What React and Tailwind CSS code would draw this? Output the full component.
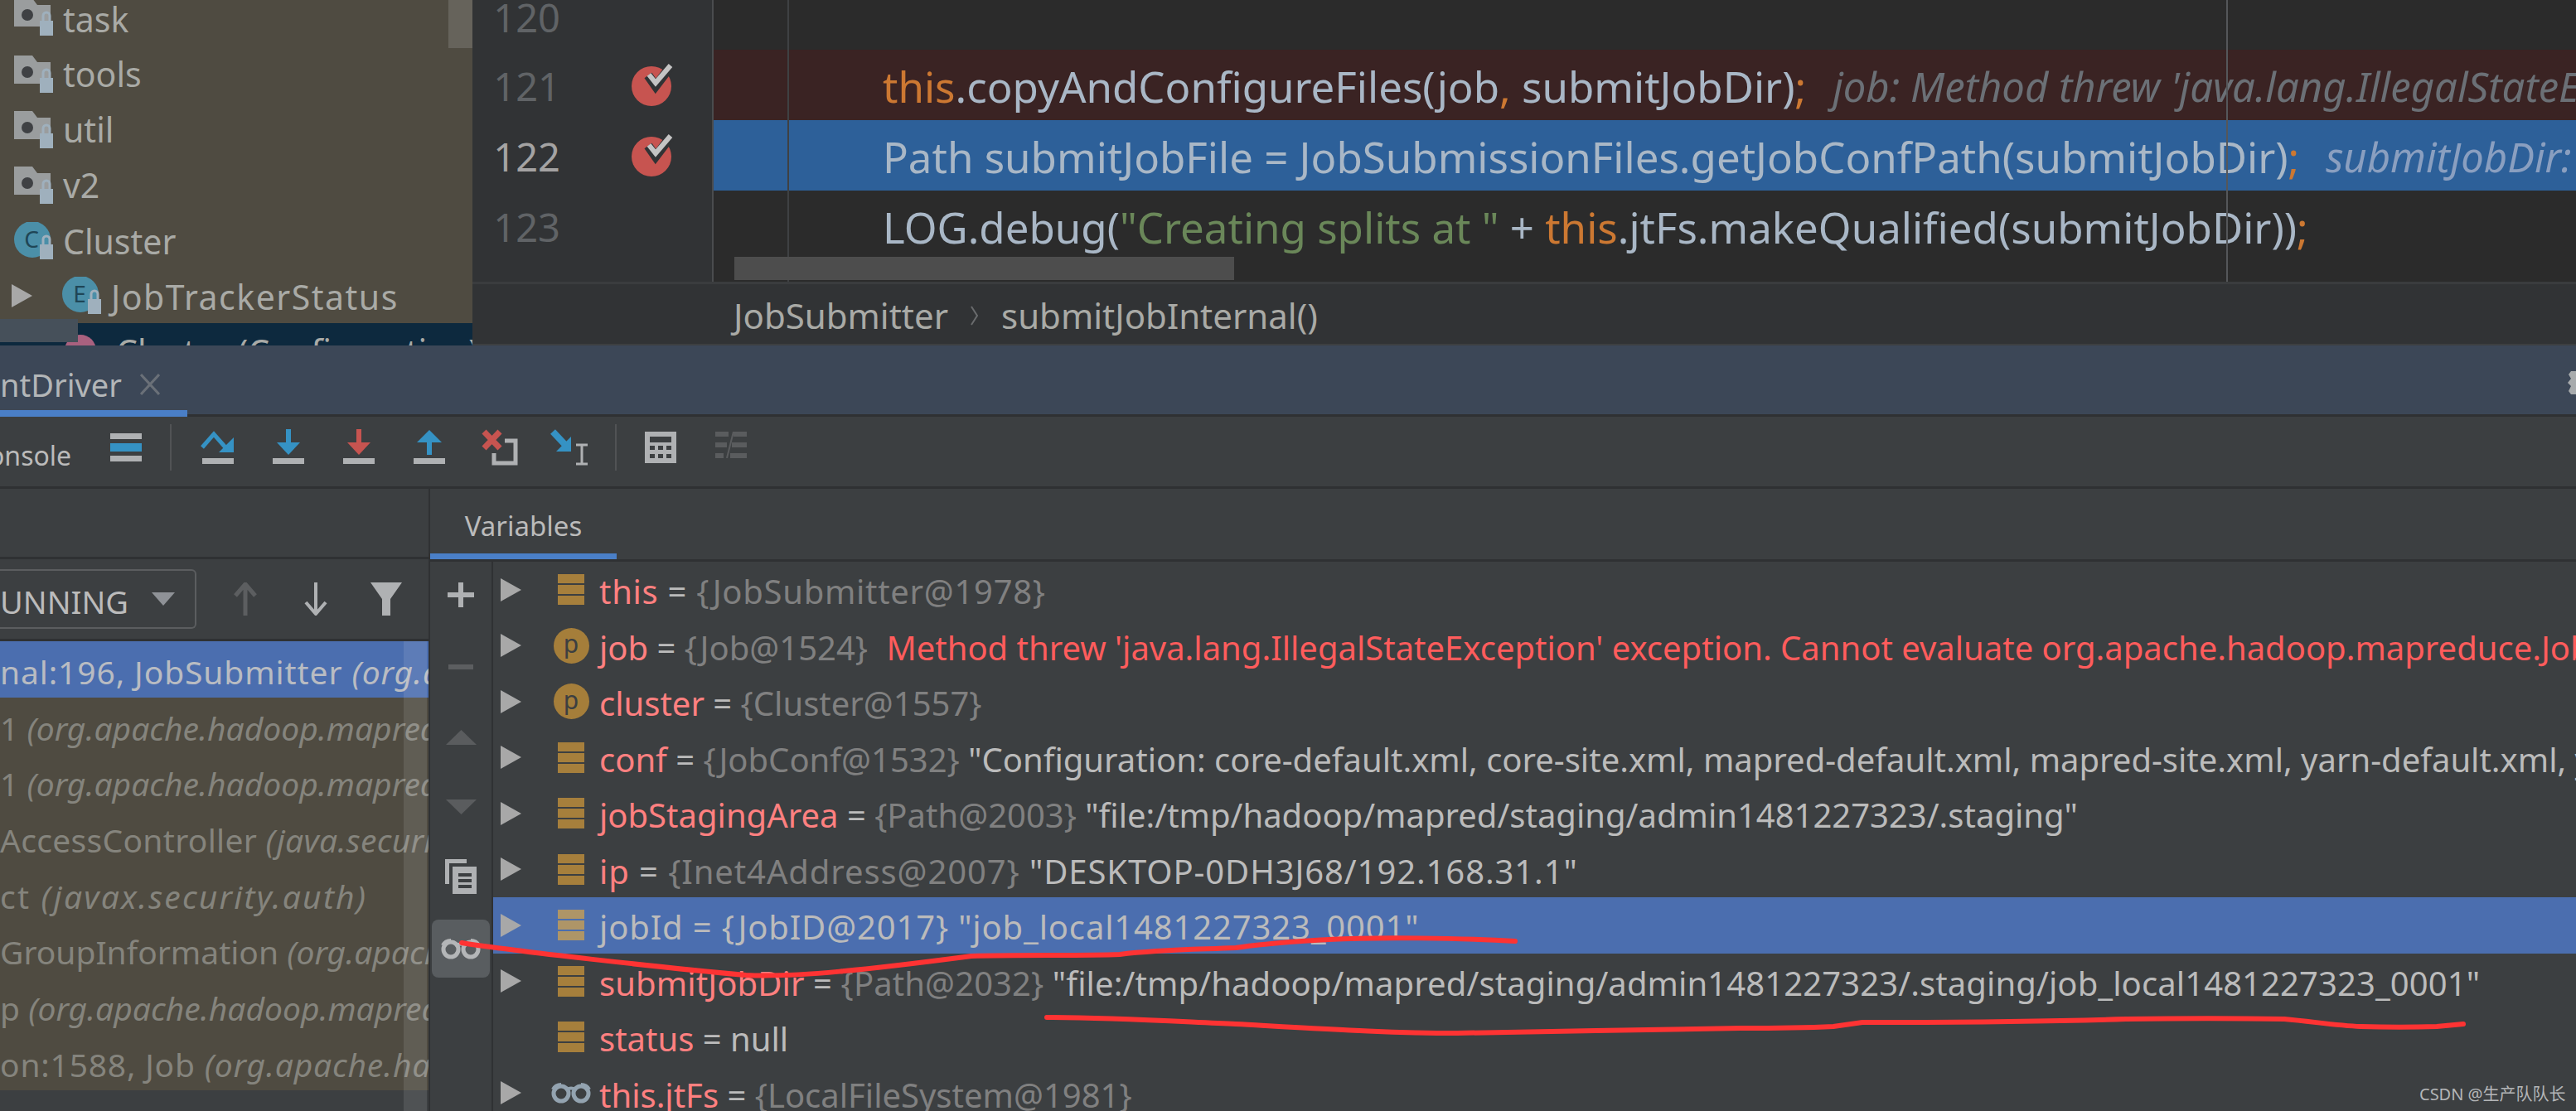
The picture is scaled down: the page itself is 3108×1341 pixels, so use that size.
const bars = "#a67f3c";

function FolderIcon() {
  return (
    <svg width="48" height="46" viewBox="0 0 48 46" className="shrink-0">
      <path d="M0 0H22L28 8H44V34H0Z" fill="#9a9d9e" />
      <circle cx="16" cy="20" r="7" fill="#3f4144" />
      <rect x="31" y="27" width="16" height="18" fill="#9fb0bd" />
      <path d="M35 27V21a4 4 0 0 1 8 0V27" fill="none" stroke="#9fb0bd" strokeWidth="3" />
    </svg>
  );
}

function ClassIcon({ letter }) {
  return (
    <svg width="48" height="46" viewBox="0 0 48 46" className="shrink-0">
      <circle cx="22" cy="21" r="22" fill="#4b8fa8" />
      <text x="21" y="31" textAnchor="middle" fontSize="28" fontFamily="Noto Sans" fill="#1f4656">{letter}</text>
      <rect x="31" y="27" width="16" height="18" fill="#9fb0bd" />
      <path d="M35 27V21a4 4 0 0 1 8 0V27" fill="none" stroke="#9fb0bd" strokeWidth="3" />
    </svg>
  );
}

function Breakpoint() {
  return (
    <svg width="52" height="52" viewBox="0 0 52 52">
      <circle cx="24" cy="28" r="24" fill="#c75450" />
      <path d="M20 15L29 28L48 3" fill="none" stroke="#313335" strokeWidth="11" />
      <path d="M21 14L29 24L47 3" fill="none" stroke="#c4c4c4" strokeWidth="6" />
    </svg>
  );
}

function TreeTriangle({ color = "#a8a8a8" }) {
  return (
    <svg width="25" height="28" viewBox="0 0 25 28" className="shrink-0">
      <path d="M0 0L25 14L0 28Z" fill={color} />
    </svg>
  );
}

function FieldIcon({ color = bars }) {
  return (
    <div className="flex w-[32px] flex-col gap-[2px]">
      <div className="h-[11px]" style={{ backgroundColor: color }} />
      <div className="h-[11px]" style={{ backgroundColor: color }} />
      <div className="h-[11px]" style={{ backgroundColor: color }} />
    </div>
  );
}

function ParamIcon() {
  return (
    <div className="flex h-[43px] w-[43px] items-center justify-center rounded-full bg-[#a57e3a] pb-1 text-[30px] leading-none text-[#3c3f41]">
      p
    </div>
  );
}

function Glasses({ color = "#a9b0b5" }) {
  return (
    <svg width="50" height="26" viewBox="0 0 50 26" className="shrink-0">
      <circle cx="13" cy="14" r="9" fill="none" stroke={color} strokeWidth="5" />
      <circle cx="37" cy="14" r="9" fill="none" stroke={color} strokeWidth="5" />
      <path d="M3 9Q6 3 13 3M47 9Q44 3 37 3M20 9Q25 6 30 9" fill="none" stroke={color} strokeWidth="4" />
    </svg>
  );
}

const Gray = ({ children }) => <span className="text-[#808080]">{children}</span>;
const Name = ({ children }) => <span className="text-[#ff8080]">{children}</span>;

const variables = [
  { icon: "field", arrow: true, track: "tracking-[0.7px]", body: <><Name>this</Name> = <Gray>{"{JobSubmitter@1978}"}</Gray></> },
  { icon: "param", arrow: true, body: <><Name>job</Name> = <Gray>{"{Job@1524}"}</Gray> <span className="ml-[12px] text-[#ff5c5c]">Method threw 'java.lang.IllegalStateException' exception. Cannot evaluate org.apache.hadoop.mapreduce.Job.toString()</span></> },
  { icon: "param", arrow: true, body: <><Name>cluster</Name> = <Gray>{"{Cluster@1557}"}</Gray></> },
  { icon: "field", arrow: true, body: <><Name>conf</Name> = <Gray>{"{JobConf@1532}"}</Gray> "Configuration: core-default.xml, core-site.xml, mapred-default.xml, mapred-site.xml, yarn-default.xml, yarn-site.xml"</> },
  { icon: "field", arrow: true, body: <><Name>jobStagingArea</Name> = <Gray>{"{Path@2003}"}</Gray> "file:/tmp/hadoop/mapred/staging/admin1481227323/.staging"</> },
  { icon: "field", arrow: true, track: "tracking-[0.9px]", body: <><Name>ip</Name> = <Gray>{"{Inet4Address@2007}"}</Gray> "DESKTOP-0DH3J68/192.168.31.1"</> },
  { icon: "field", arrow: true, selected: true, track: "tracking-[0.85px]", body: <>jobId = {"{JobID@2017}"} "job_local1481227323_0001"</> },
  { icon: "field", arrow: true, track: "tracking-[0.1px]", body: <><Name>submitJobDir</Name> = <Gray>{"{Path@2032}"}</Gray> "file:/tmp/hadoop/mapred/staging/admin1481227323/.staging/job_local1481227323_0001"</> },
  { icon: "field", arrow: false, body: <><Name>status</Name> = null</> },
  { icon: "glasses", arrow: true, body: <><Name>this.jtFs</Name> = <Gray>{"{LocalFileSystem@1981}"}</Gray></> },
];

const frames = [
  { name: "nal:196, JobSubmitter ", pkg: "(org.apache.hadoop.mapreduce)", track: "tracking-[0.9px]" },
  { name: "1 ", pkg: "(org.apache.hadoop.mapreduce.Job)" },
  { name: "1 ", pkg: "(org.apache.hadoop.mapreduce.Job)" },
  { name: "AccessController ", pkg: "(java.security)", track: "tracking-[0.3px]" },
  { name: "ct ", pkg: "(javax.security.auth)", track: "tracking-[2.2px]" },
  { name: "GroupInformation ", pkg: "(org.apache.hadoop.security)" },
  { name: "p ", pkg: "(org.apache.hadoop.mapreduce)" },
  { name: "on:1588, Job ", pkg: "(org.apache.hadoop.mapreduce)", track: "tracking-[0.8px]" },
];

function Tree() {
  const rows = ["tools", "util", "v2"];
  return (
    <div className="relative h-[417px] w-[570px] shrink-0 overflow-hidden bg-[#4f4b41] text-[41px] leading-none text-[#a9aaa6]">
      <div className="flex h-[56px] items-start gap-[11px] pl-[17px]">
        <div className="-mt-[2px]"><FolderIcon /></div>
        <span className="mt-[3px]">task</span>
      </div>
      {rows.map((r) => (
        <div key={r} className="flex h-[67px] items-center gap-[11px] pl-[17px]">
          <FolderIcon />
          <span>{r}</span>
        </div>
      ))}
      <div className="flex h-[67px] items-center gap-[11px] pl-[17px]">
        <ClassIcon letter="C" />
        <span className="mt-[2px]">Cluster</span>
      </div>
      <div className="flex h-[66px] items-center pl-[14px]">
        <TreeTriangle />
        <div className="ml-[36px]"><ClassIcon letter="E" /></div>
        <span className="ml-[11px] mt-[2px] tracking-[1.5px]">JobTrackerStatus</span>
      </div>
      <div className="flex h-[27px] items-start overflow-hidden bg-[#0d293e] pl-[78px]">
        <div className="mt-[14px] h-[38px] w-[38px] shrink-0 rounded-full bg-[#a9617f]" />
        <span className="ml-[24px] mt-[14px] whitespace-nowrap text-[#a9aaa6]">Cluster (Configuration)</span>
      </div>
      <div className="absolute left-[541px] top-0 h-[58px] w-[29px] bg-[#66635b]" />
      <div className="absolute left-0 top-[385px] h-[28px] w-[94px] bg-[#46505a]" />
    </div>
  );
}

function CodeRow({ className = "", children }) {
  return <div className={`flex h-[85px] items-center whitespace-nowrap pl-[204px] pt-[3px] ${className}`}>{children}</div>;
}

function Editor() {
  return (
    <div className="relative h-[340px] min-w-0 flex-1 overflow-hidden bg-[#2b2b2b] text-[51px] leading-none text-[#a9b7c6]">
      <div className="h-[60px]" />
      <CodeRow className="bg-[#3a2323]">
        <span><span className="text-[#cc7832]">this</span>.copyAndConfigureFiles(job<span className="text-[#cc7832]">,</span> submitJobDir)<span className="text-[#cc7832]">;</span></span>
        <span className="ml-[32px] text-[49px] italic text-[#6b7076]">job: Method threw 'java.lang.IllegalStateException' exception.</span>
      </CodeRow>
      <CodeRow className="bg-[#2d6099]">
        <span>Path submitJobFile = JobSubmissionFiles.getJobConfPath(submitJobDir)<span className="text-[#cc7832]">;</span></span>
        <span className="ml-[32px] text-[49px] italic text-[#8a9fc0]">submitJobDir: "file:/tmp"</span>
      </CodeRow>
      <CodeRow>
        <span>LOG.debug(<span className="text-[#6a8759]">"Creating splits at "</span> + <span className="text-[#cc7832]">this</span>.jtFs.makeQualified(submitJobDir))<span className="text-[#cc7832]">;</span></span>
      </CodeRow>
      <CodeRow>
        <span className="mt-[5px]">int maps = <span className="text-[#cc7832]">this</span>.writeSplits(job<span className="text-[#cc7832]">,</span> submitJobDir)<span className="text-[#cc7832]">;</span></span>
      </CodeRow>
      <div className="absolute bottom-0 left-[89px] top-0 w-[2px] bg-[#3f4143]" />
      <div className="absolute bottom-0 left-[1825px] top-0 w-[2px] bg-[#55575a]" />
      <div className="absolute left-[25px] top-[310px] h-[28px] w-[603px] bg-[#4d4d4d]" />
    </div>
  );
}

function Gutter() {
  const rows = [
    { n: "121", current: false },
    { n: "122", current: true },
  ];
  return (
    <div className="h-[340px] w-[291px] shrink-0 overflow-hidden border-r-[2px] border-[#4a4c4e] bg-[#313335] text-[47px] leading-none text-[#606366]">
      <div className="flex h-[60px] items-start pl-[20px]">
        <span className="-mt-[2px] w-[86px] text-right">120</span>
      </div>
      {rows.map((r) => (
        <div key={r.n} className="flex h-[85px] items-center pl-[20px]">
          <span className={`mt-[3px] w-[86px] text-right ${r.current ? "text-[#a4a3a3]" : ""}`}>{r.n}</span>
          <div className="ml-[86px] -mt-[2px]"><Breakpoint /></div>
        </div>
      ))}
      <div className="flex h-[85px] items-center pl-[20px]">
        <span className="mt-[3px] w-[86px] text-right">123</span>
      </div>
    </div>
  );
}

function Bar({ color = "#afb1b3" }) {
  return <rect x="3" y="35" width="38" height="7" fill={color} />;
}

function Toolbar() {
  const boxed = "flex w-[85px] shrink-0 justify-center";
  return (
    <div className="flex h-[84px] shrink-0 items-center overflow-hidden bg-[#3c3f41] pb-[10px]">
      <span className="-ml-[14px] mt-[20px] w-[147px] shrink-0 text-[32px] leading-none text-[#bbbbbb]">onsole</span>
      <div className="flex w-[38px] flex-col gap-[5px]">
        <div className="h-[7px] bg-[#afb1b3]" />
        <div className="h-[10px] bg-[#3592c4]" />
        <div className="h-[7px] bg-[#afb1b3]" />
      </div>
      <div className="ml-[34px] h-[56px] w-[2px] bg-[#515355]" />
      <div className="ml-[13px] flex">
        <div className={boxed}>
          <svg width="44" height="44" viewBox="0 0 44 44">
            <path d="M3 22L17 6L31 22" fill="none" stroke="#3592c4" strokeWidth="5" />
            <path d="M41 10V28H23Z" fill="#3592c4" />
            <Bar />
          </svg>
        </div>
        <div className={boxed}>
          <svg width="44" height="44" viewBox="0 0 44 44">
            <path d="M22 0V20" stroke="#3592c4" strokeWidth="6" />
            <path d="M8 16H36L22 31Z" fill="#3592c4" />
            <Bar />
          </svg>
        </div>
        <div className={boxed}>
          <svg width="44" height="44" viewBox="0 0 44 44">
            <path d="M22 0V20" stroke="#c75450" strokeWidth="6" />
            <path d="M8 16H36L22 31Z" fill="#c75450" />
            <Bar />
          </svg>
        </div>
        <div className={boxed}>
          <svg width="44" height="44" viewBox="0 0 44 44">
            <path d="M22 14V31" stroke="#3592c4" strokeWidth="6" />
            <path d="M22 1L37 16H7Z" fill="#3592c4" />
            <Bar />
          </svg>
        </div>
        <div className={boxed}>
          <svg width="44" height="44" viewBox="0 0 44 44">
            <path d="M28 14H41V41H15V29" fill="none" stroke="#afb1b3" strokeWidth="5" />
            <path d="M3 3L22 23M22 3L3 23" stroke="#c75450" strokeWidth="7" />
          </svg>
        </div>
        <div className={boxed}>
          <svg width="48" height="44" viewBox="0 0 48 44">
            <path d="M3 3L18 19" stroke="#3592c4" strokeWidth="8" />
            <path d="M25 9V27H7Z" fill="#3592c4" />
            <path d="M31 19H45M38 19V42M31 42H45" fill="none" stroke="#afb1b3" strokeWidth="3" />
          </svg>
        </div>
      </div>
      <div className="ml-[12px] h-[56px] w-[2px] bg-[#515355]" />
      <div className="ml-[10px] flex">
        <div className={boxed}>
          <svg width="38" height="38" viewBox="0 0 38 38">
            <path fillRule="evenodd" fill="#afb1b3" d="M0 0H38V38H0ZM6 6V13H32V6ZM6 17V22H12V17ZM16 17V22H22V17ZM26 17V22H32V17ZM6 27V32H12V27ZM16 27V32H22V27ZM26 27V32H32V27Z" />
          </svg>
        </div>
        <div className={boxed}>
          <svg width="38" height="32" viewBox="0 0 38 32">
            <path fill="#5a5c5e" d="M0 0H16V6H0ZM22 0H38V6H22ZM0 13H14V19H0ZM20 13H38V19H20ZM0 26H10V32H0ZM18 26H38V32H18Z" />
            <path d="M22 0L14 32" stroke="#5a5c5e" strokeWidth="2" />
          </svg>
        </div>
      </div>
    </div>
  );
}

function FramesPanel() {
  return (
    <div className="relative flex h-full w-[517px] shrink-0 flex-col overflow-hidden bg-[#3c3f41]">
      <div className="h-[85px] shrink-0 border-b-[3px] border-[#2f3133]" />
      <div className="flex h-[99px] shrink-0 items-center border-b-[3px] border-[#2f3133]">
        <div className="flex h-[72px] w-[237px] shrink-0 items-center justify-between rounded-r-[6px] border-y-[2px] border-r-[2px] border-[#5b5d5f] pr-[24px]">
          <span className="mt-[6px] text-[38px] leading-none text-[#bbbbbb]">UNNING</span>
          <svg width="28" height="16" viewBox="0 0 28 16"><path d="M0 0H28L14 16Z" fill="#8f9297" /></svg>
        </div>
        <svg width="28" height="40" viewBox="0 0 28 40" className="ml-[45px]"><path d="M14 2V40M2 16L14 2L26 16" fill="none" stroke="#5c5e60" strokeWidth="5" /></svg>
        <svg width="28" height="40" viewBox="0 0 28 40" className="ml-[57px]"><path d="M14 0V38M2 24L14 38L26 24" fill="none" stroke="#afb1b3" strokeWidth="4" /></svg>
        <svg width="38" height="40" viewBox="0 0 38 40" className="ml-[52px]"><path d="M0 0H38L24 20V40H14V20Z" fill="#afb1b3" /></svg>
      </div>
      <div className="whitespace-nowrap text-[39px] leading-none">
        {frames.map((f, i) => (
          <div key={i} className={`flex h-[67.7px] items-center overflow-hidden pt-[5px] ${i === 0 ? "bg-[#4b6eaf] text-[#b9bcc2]" : "bg-[#4f4b41] text-[#85847d]"} ${f.track || ""}`}>
            <span className="whitespace-pre">{f.name}</span>
            <span className="italic">{f.pkg}</span>
          </div>
        ))}
        <div className="h-[40px] pl-[76px] pt-[20px] text-[#8a8c8e]">in:23, WordCountDriver</div>
      </div>
      <div className="absolute bottom-0 left-[487px] top-[184px] w-[28px] bg-[#ffffff1a]" />
    </div>
  );
}

function SideButtons() {
  return (
    <div className="flex h-full w-[76px] shrink-0 flex-col items-center border-r-[2px] border-[#2f3133] bg-[#3c3f41]">
      <svg width="32" height="30" viewBox="0 0 32 30" className="mt-[25px] shrink-0"><path d="M16 0V30M0 15H32" stroke="#afb1b3" strokeWidth="6" /></svg>
      <div className="mt-[69px] h-[6px] w-[30px] shrink-0 bg-[#5c5e60]" />
      <svg width="37" height="18" viewBox="0 0 37 18" className="mt-[73px] shrink-0"><path d="M18.500 0L37 18H0Z" fill="#5a5c5e" /></svg>
      <svg width="37" height="18" viewBox="0 0 37 18" className="mt-[66px] shrink-0"><path d="M0 0H37L18.500 18Z" fill="#5a5c5e" /></svg>
      <svg width="38" height="42" viewBox="0 0 38 42" className="mt-[54px] shrink-0">
        <path d="M0 0H26V5H5V30H0Z" fill="#afb1b3" />
        <path fillRule="evenodd" fill="#afb1b3" d="M9 9H38V42H9ZM16 17V21H32V17ZM16 24V28H32V24ZM16 31V35H32V31Z" />
      </svg>
      <div className="mt-[31px] flex h-[70px] w-[70px] shrink-0 items-center justify-center rounded-[8px] bg-[#595d60]">
        <Glasses color="#b4b6b8" />
      </div>
    </div>
  );
}

function VariableRow({ v }) {
  return (
    <div className={`flex h-[67.5px] items-center whitespace-nowrap ${v.selected ? "bg-[#4b6eaf]" : ""}`}>
      <div className="ml-[9px] flex w-[25px] shrink-0 justify-center">{v.arrow && <TreeTriangle />}</div>
      <div className="ml-[36px] flex w-[48px] shrink-0 justify-center">
        {v.icon === "field" && <FieldIcon color={v.selected ? "#ae9567" : bars} />}
        {v.icon === "param" && <ParamIcon />}
        {v.icon === "glasses" && <Glasses color="#93a3b0" />}
      </div>
      <span className={`ml-[10px] mt-[5px] ${v.track || ""}`}>{v.body}</span>
    </div>
  );
}

function VariablesPanel() {
  return (
    <div className="flex h-full min-w-0 flex-1 flex-col overflow-hidden bg-[#3c3f41]">
      <div className="flex h-[88px] shrink-0 border-b-[3px] border-[#2f3133]">
        <div className="flex w-[225px] items-center justify-center border-b-[7px] border-[#4a7fc7] pt-[10px] text-[33px] leading-none text-[#bbbbbb]">
          Variables
        </div>
      </div>
      <div className="flex min-h-0 flex-1">
        <SideButtons />
        <div className="min-w-0 flex-1 overflow-hidden text-[40px] leading-none text-[#bbbbbb]">
          {variables.map((v, i) => <VariableRow key={i} v={v} />)}
        </div>
      </div>
    </div>
  );
}

function Annotations() {
  return (
    <svg width="3108" height="1341" viewBox="0 0 3108 1341" className="pointer-events-none absolute left-0 top-0">
      <path d="M557 1138C620 1148 800 1168 900 1177C960 1180 1050 1170 1172 1154C1230 1152 1300 1154 1351 1152C1400 1146 1450 1146 1491 1144C1530 1138 1570 1136 1603 1134C1660 1131 1760 1132 1828 1136" fill="none" stroke="#fe3333" strokeWidth="6" strokeLinecap="round" />
      <path d="M1263 1228C1340 1228 1420 1233 1491 1236C1600 1242 1680 1247 1758 1247C1860 1245 2000 1243 2100 1241C2150 1241 2190 1240 2212 1239L2247 1234C2340 1234 2470 1233 2565 1230C2630 1229 2700 1229 2756 1230C2790 1233 2820 1238 2848 1239C2880 1240 2910 1240 2940 1239L2972 1236" fill="none" stroke="#fe3333" strokeWidth="6" strokeLinecap="round" />
    </svg>
  );
}

export default function App() {
  return (
    <div className="relative flex h-[1341px] w-[3108px] flex-col overflow-hidden bg-[#3c3f41] font-['Noto_Sans',sans-serif]">
      {/* project tree + editor */}
      <div className="flex h-[417px] shrink-0">
        <Tree />
        <div className="flex min-w-0 flex-1 flex-col">
          <div className="flex h-[340px] shrink-0">
            <Gutter />
            <Editor />
          </div>
          <div className="flex h-[75px] shrink-0 items-center gap-[27px] border-t-[3px] border-[#3a3c3e] bg-[#313335] pl-[315px] pt-[3px] text-[42px] leading-none text-[#a9aaa6]">
            <span>JobSubmitter</span>
            <svg width="10" height="24" viewBox="0 0 10 24"><path d="M1 1L8 12L1 23" fill="none" stroke="#6a6c6e" strokeWidth="2" /></svg>
            <span>submitJobInternal()</span>
          </div>
          <div className="h-[2px] shrink-0 bg-[#3d3f41]" />
        </div>
      </div>

      {/* debug tool window tab */}
      <div className="flex h-[86px] shrink-0 items-start justify-between border-b-[3px] border-[#2f3133] bg-[#3c4757]">
        <div className="flex h-[86px] w-[226px] items-center border-b-[8px] border-[#4a7fc7] pt-[16px]">
          <span className="text-[38px] leading-none text-[#b3b6b8]">ntDriver</span>
          <svg width="24" height="26" viewBox="0 0 24 26" className="ml-[22px]"><path d="M1 1L23 25M23 1L1 25" stroke="#6a7078" strokeWidth="3" /></svg>
        </div>
        <svg width="10" height="28" viewBox="0 0 10 28" className="mt-[31px]">
          <path d="M4 0H10V28H4L1 24L4 18L0 14L4 9L1 4Z" fill="#a8abad" />
        </svg>
      </div>

      <Toolbar />
      <div className="h-[3px] shrink-0 bg-[#2f3133]" />

      {/* frames + variables */}
      <div className="flex min-h-0 flex-1">
        <FramesPanel />
        <div className="w-[2px] shrink-0 bg-[#2f3133]" />
        <VariablesPanel />
      </div>

      <Annotations />
      <div className="absolute left-[2919px] top-[1311px] font-['Noto_Sans','Noto_Sans_CJK_SC',sans-serif] text-[20px] leading-none text-[#b4b6b8]">CSDN @生产队队长</div>
    </div>
  );
}
